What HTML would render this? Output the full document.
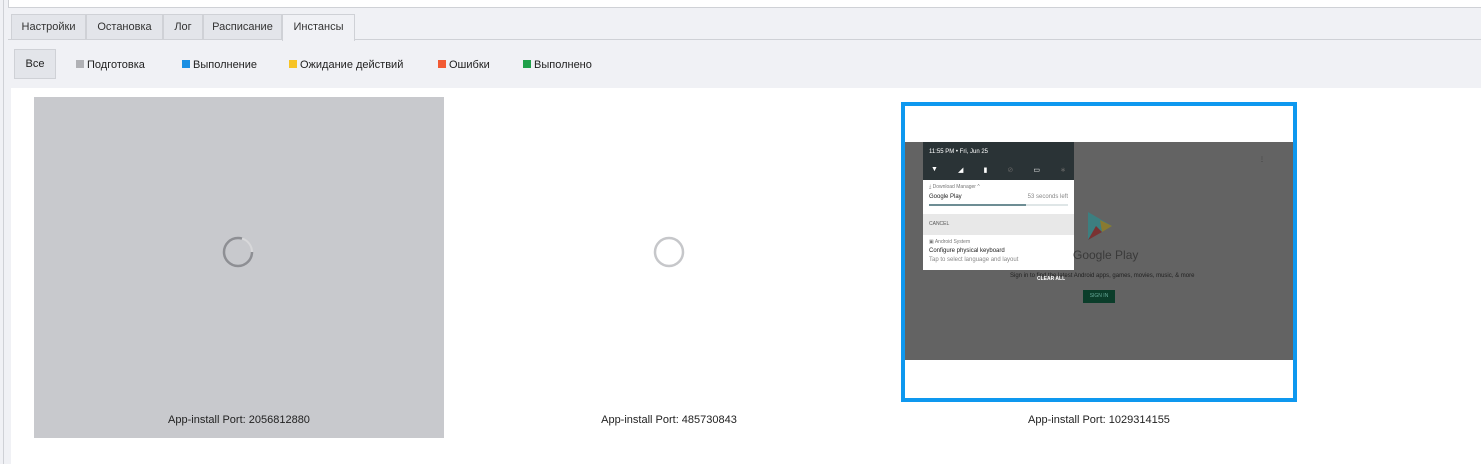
<!DOCTYPE html>
<html><head><meta charset="utf-8"><style>
*{margin:0;padding:0;box-sizing:border-box}
body{width:1481px;height:464px;overflow:hidden;background:#f0f1f5;font-family:"Liberation Sans",sans-serif;font-size:11px;color:#222;position:relative}
.abs{position:absolute}
.top{left:8px;top:0;width:1473px;height:8px;background:#fff;border-bottom:1px solid #cfd1d6;border-left:1px solid #cfd1d6}
.lb{left:3px;top:0;width:1px;height:464px;background:#cfd1d6}
.tab{top:14px;height:26px;background:#e3e5ea;border:1px solid #cfd1d6;line-height:24px;text-align:center;font-size:11px;color:#333}
.tabline{left:8px;top:39px;width:1473px;height:1px;background:#cfd1d6}
.all{left:14px;top:49px;width:42px;height:30px;background:#e3e5ea;border:1px solid #cfd1d6;line-height:28px;text-align:center}
.f{top:59px;line-height:12px}
.f i{display:inline-block;width:8px;height:8px;margin-right:3px;vertical-align:0px}
.content{left:11px;top:88px;width:1470px;height:376px;background:#fff}
.cap{font-size:11px;color:#222;text-align:center;width:410px}
</style></head><body>
<div class="abs lb"></div>
<div class="abs top"></div>
<div class="abs tab" style="left:11px;width:75px">Настройки</div>
<div class="abs tab" style="left:86px;width:77px">Остановка</div>
<div class="abs tab" style="left:163px;width:40px">Лог</div>
<div class="abs tab" style="left:203px;width:79px">Расписание</div>
<div class="abs tabline"></div>
<div class="abs tab" style="left:282px;width:73px;background:#f0f1f5;border-bottom:none;height:27px">Инстансы</div>
<div class="abs all">Все</div>
<div class="abs f" style="left:76px"><i style="background:#b0b1b5"></i>Подготовка</div>
<div class="abs f" style="left:182px"><i style="background:#1a8fe3"></i>Выполнение</div>
<div class="abs f" style="left:289px"><i style="background:#f7c325"></i>Ожидание действий</div>
<div class="abs f" style="left:438px"><i style="background:#f25a33"></i>Ошибки</div>
<div class="abs f" style="left:523px"><i style="background:#1fa04a"></i>Выполнено</div>
<div class="abs content"></div>
<div class="abs" style="left:34px;top:97px;width:410px;height:341px;background:#c8c9cd"></div>
<svg class="abs" style="left:222px;top:236px" width="32" height="32"><circle cx="16" cy="16" r="14" fill="none" stroke="#8e8f94" stroke-width="2.5" stroke-dasharray="70 18"/><circle cx="16" cy="16" r="14" fill="none" stroke="#d8d8da" stroke-width="2" stroke-dasharray="0 70 18 0"/></svg>
<div class="abs cap" style="left:34px;top:414px">App-install Port: 2056812880</div>
<svg class="abs" style="left:653px;top:236px" width="32" height="32"><circle cx="16" cy="16" r="14" fill="none" stroke="#c6c7ca" stroke-width="2.5"/></svg>
<div class="abs cap" style="left:464px;top:414px">App-install Port: 485730843</div>
<div class="abs" style="left:901px;top:102px;width:396px;height:300px;border:4px solid #0e98ef;background:#fff"></div>
<div class="abs" style="left:905px;top:142px;width:388px;height:218px;background:#636363;overflow:hidden;font-size:6px;color:#ddd">
 <div class="abs" style="left:18px;top:0;width:151px;height:38px;background:#2a3336;color:#fff">
  <div class="abs" style="left:6px;top:7px;font-size:6px">11:55 PM • Fri, Jun 25</div>
  <div class="abs" style="left:8px;top:24px;width:135px;display:flex;justify-content:space-between;font-size:7px"><span>▼</span><span>◢</span><span>▮</span><span style="color:#666">⊘</span><span>▭</span><span style="color:#666">∗</span></div>
 </div>
 <div class="abs" style="left:18px;top:38px;width:151px;height:34px;background:#fff;color:#222">
  <div class="abs" style="left:6px;top:4px;color:#777;font-size:5px">⤓ Download Manager ^</div>
  <div class="abs" style="left:6px;top:14px">Google Play</div>
  <div class="abs" style="right:6px;top:14px;color:#888">53 seconds left</div>
  <div class="abs" style="left:6px;top:24px;width:139px;height:2px;background:#dfe6e7"><div style="width:70%;height:2px;background:#6d8d94"></div></div>
 </div>
 <div class="abs" style="left:18px;top:72px;width:151px;height:21px;background:#e8e8e8;color:#555"><div class="abs" style="left:6px;top:7px;font-size:5px">CANCEL</div></div>
 <div class="abs" style="left:18px;top:93px;width:151px;height:35px;background:#fff;color:#222">
  <div class="abs" style="left:6px;top:4px;color:#777;font-size:5px">▣ Android System</div>
  <div class="abs" style="left:6px;top:13px">Configure physical keyboard</div>
  <div class="abs" style="left:6px;top:22px;color:#888">Tap to select language and layout</div>
 </div>
 <svg class="abs" style="left:181px;top:70px" width="28" height="30"><polygon points="2,0 26,14 2,28" fill="#3c7f80"/><polygon points="14,8 26,14 16,20" fill="#8a7a30"/><polygon points="2,28 16,20 10,14" fill="#7a3232"/></svg>
 <div class="abs" style="left:168px;top:106px;font-size:12px;color:#3a3a3a">Google Play</div>
 <div class="abs" style="left:105px;top:131px;color:#222">Sign in to find the latest Android apps, games, movies, music, &amp; more</div>
 <div class="abs" style="left:132px;top:134px;color:#fff;font-weight:bold;font-size:5px">CLEAR ALL</div>
 <div class="abs" style="left:178px;top:148px;width:32px;height:13px;background:#0b3d2a;color:#6a9;font-size:5px;text-align:center;line-height:13px">SIGN IN</div>
 <div class="abs" style="left:354px;top:14px;color:#333">⋮</div>
</div>
<div class="abs cap" style="left:894px;top:414px">App-install Port: 1029314155</div>
</body></html>
